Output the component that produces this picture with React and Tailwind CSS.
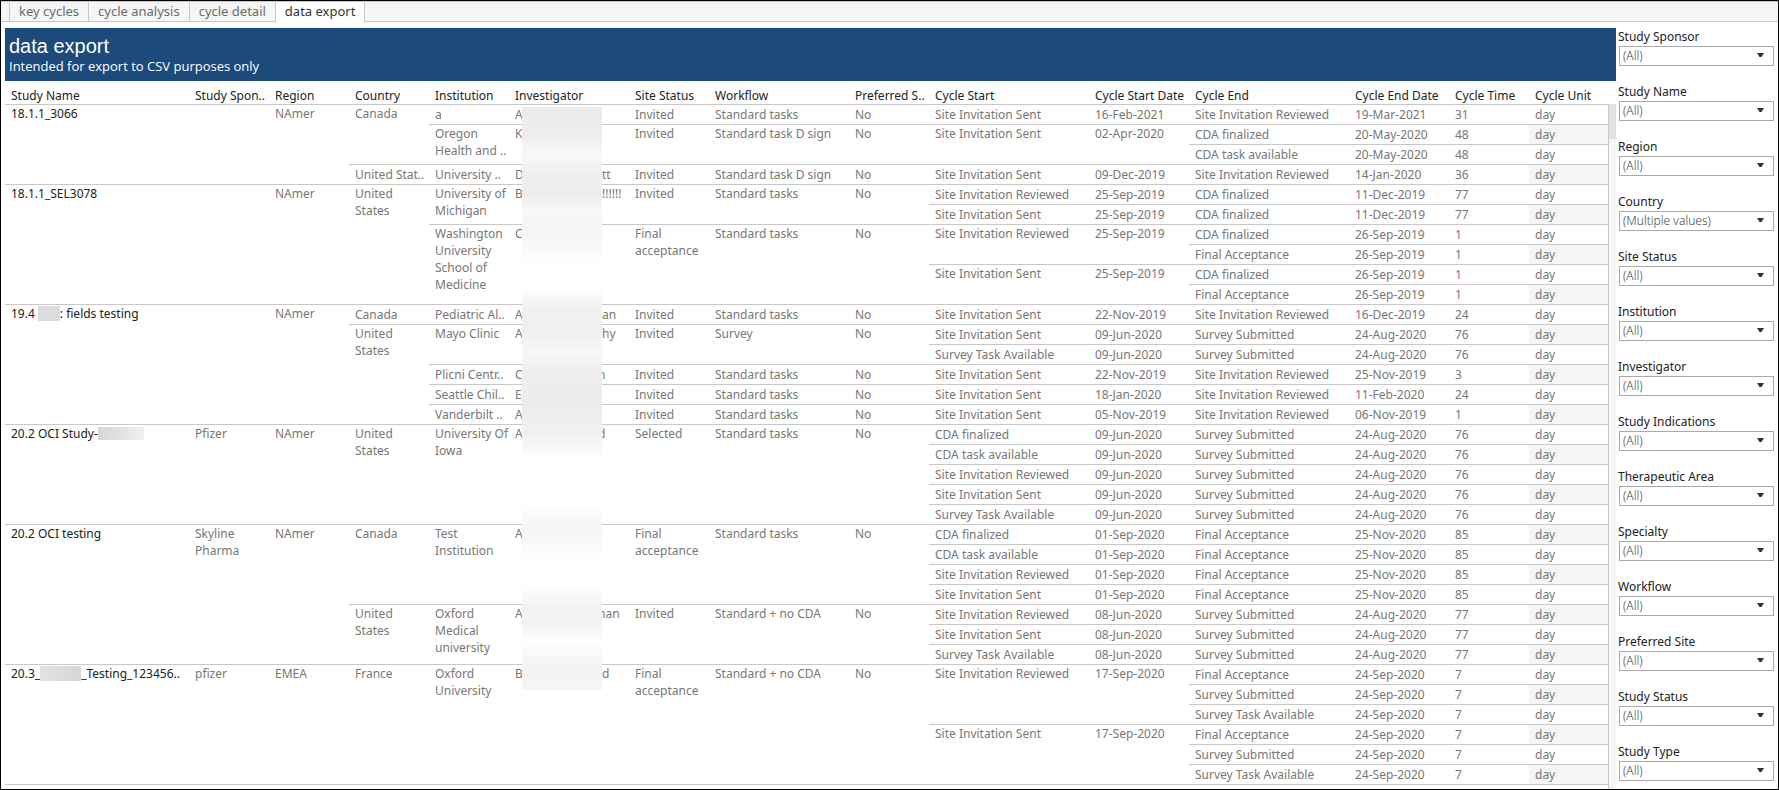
import React from 'react';

const tabs = ['key cycles', 'cycle analysis', 'cycle detail', 'data export'];

const columns = [
  { label: 'Study Name', width: 'w-[184px]' },
  { label: 'Study Spon..', width: 'w-[80px]' },
  { label: 'Region', width: 'w-[80px]' },
  { label: 'Country', width: 'w-[80px]' },
  { label: 'Institution', width: 'w-[80px]' },
  { label: 'Investigator', width: 'w-[120px]' },
  { label: 'Site Status', width: 'w-[80px]' },
  { label: 'Workflow', width: 'w-[140px]' },
  { label: 'Preferred S..', width: 'w-[80px]' },
  { label: 'Cycle Start', width: 'w-[160px]' },
  { label: 'Cycle Start Date', width: 'w-[100px]' },
  { label: 'Cycle End', width: 'w-[160px]' },
  { label: 'Cycle End Date', width: 'w-[100px]' },
  { label: 'Cycle Time', width: 'w-[80px]' },
  { label: 'Cycle Unit', width: 'w-[79px]' },
];

const filters = [
  ['Study Sponsor', '(All)'],
  ['Study Name', '(All)'],
  ['Region', '(All)'],
  ['Country', '(Multiple values)'],
  ['Site Status', '(All)'],
  ['Institution', '(All)'],
  ['Investigator', '(All)'],
  ['Study Indications', '(All)'],
  ['Therapeutic Area', '(All)'],
  ['Specialty', '(All)'],
  ['Workflow', '(All)'],
  ['Preferred Site', '(All)'],
  ['Study Status', '(All)'],
  ['Study Type', '(All)'],
];

const node = (cells, children = []) => ({ cells, children });

const Masked = ({ first, last, clipped }) => (
  <span className="flex">
    <span className="w-[7px] shrink-0">{first}</span>
    <span className={clipped ? 'w-[76px] shrink-0' : 'w-[80px] shrink-0'} />
    <span>{last}</span>
  </span>
);

const NameMask = ({ before, mask, after }) => (
  <span className="flex items-center">
    {before}
    <span className={`${mask} shrink-0`} />
    {after}
  </span>
);

const end = (name, date, time) => node([name, date, time, 'day']);

// study > country > institution > cycle start > cycle end
const studies = [
  node(['18.1.1_3066', '', 'NAmer'], [
    node(['Canada'], [
      node(['a', <Masked first="A" />, 'Invited', 'Standard tasks', 'No'], [
        node(['Site Invitation Sent', '16-Feb-2021'], [end('Site Invitation Reviewed', '19-Mar-2021', '31')]),
      ]),
      node(['Oregon\nHealth and ..', <Masked first="K" />, 'Invited', 'Standard task D sign', 'No'], [
        node(['Site Invitation Sent', '02-Apr-2020'], [
          end('CDA finalized', '20-May-2020', '48'),
          end('CDA task available', '20-May-2020', '48'),
        ]),
      ]),
    ]),
    node(['United Stat..'], [
      node(['University ..', <Masked first="D" last="tt" />, 'Invited', 'Standard task D sign', 'No'], [
        node(['Site Invitation Sent', '09-Dec-2019'], [end('Site Invitation Reviewed', '14-Jan-2020', '36')]),
      ]),
    ]),
  ]),
  node(['18.1.1_SEL3078', '', 'NAmer'], [
    node(['United\nStates'], [
      node(['University of\nMichigan', <Masked first="B" last="!!!!!!" />, 'Invited', 'Standard tasks', 'No'], [
        node(['Site Invitation Reviewed', '25-Sep-2019'], [end('CDA finalized', '11-Dec-2019', '77')]),
        node(['Site Invitation Sent', '25-Sep-2019'], [end('CDA finalized', '11-Dec-2019', '77')]),
      ]),
      node(['Washington\nUniversity\nSchool of\nMedicine', <Masked first="C" />, 'Final\nacceptance', 'Standard tasks', 'No'], [
        node(['Site Invitation Reviewed', '25-Sep-2019'], [
          end('CDA finalized', '26-Sep-2019', '1'),
          end('Final Acceptance', '26-Sep-2019', '1'),
        ]),
        node(['Site Invitation Sent', '25-Sep-2019'], [
          end('CDA finalized', '26-Sep-2019', '1'),
          end('Final Acceptance', '26-Sep-2019', '1'),
        ]),
      ]),
    ]),
  ]),
  node([
    <NameMask before="19.4" mask="ml-[3px] h-[15px] w-[22px] bg-[#dcdcdc]" after=": fields testing" />,
    '',
    'NAmer',
  ], [
    node(['Canada'], [
      node(['Pediatric Al..', <Masked first="A" last="an" />, 'Invited', 'Standard tasks', 'No'], [
        node(['Site Invitation Sent', '22-Nov-2019'], [end('Site Invitation Reviewed', '16-Dec-2019', '24')]),
      ]),
    ]),
    node(['United\nStates'], [
      node(['Mayo Clinic', <Masked first="A" last="hy" />, 'Invited', 'Survey', 'No'], [
        node(['Site Invitation Sent', '09-Jun-2020'], [end('Survey Submitted', '24-Aug-2020', '76')]),
        node(['Survey Task Available', '09-Jun-2020'], [end('Survey Submitted', '24-Aug-2020', '76')]),
      ]),
      node(['Plicni Centr..', <Masked first="C" last="n" clipped />, 'Invited', 'Standard tasks', 'No'], [
        node(['Site Invitation Sent', '22-Nov-2019'], [end('Site Invitation Reviewed', '25-Nov-2019', '3')]),
      ]),
      node(['Seattle Chil..', <Masked first="E" />, 'Invited', 'Standard tasks', 'No'], [
        node(['Site Invitation Sent', '18-Jan-2020'], [end('Site Invitation Reviewed', '11-Feb-2020', '24')]),
      ]),
      node(['Vanderbilt ..', <Masked first="A" />, 'Invited', 'Standard tasks', 'No'], [
        node(['Site Invitation Sent', '05-Nov-2019'], [end('Site Invitation Reviewed', '06-Nov-2019', '1')]),
      ]),
    ]),
  ]),
  node([
    <NameMask before="20.2 OCI Study-" mask="h-[13px] w-[46px] bg-linear-to-r from-[#d6d6d6] to-[#f0f0f0]" />,
    'Pfizer',
    'NAmer',
  ], [
    node(['United\nStates'], [
      node(['University Of\nIowa', <Masked first="A" last="d" clipped />, 'Selected', 'Standard tasks', 'No'], [
        node(['CDA finalized', '09-Jun-2020'], [end('Survey Submitted', '24-Aug-2020', '76')]),
        node(['CDA task available', '09-Jun-2020'], [end('Survey Submitted', '24-Aug-2020', '76')]),
        node(['Site Invitation Reviewed', '09-Jun-2020'], [end('Survey Submitted', '24-Aug-2020', '76')]),
        node(['Site Invitation Sent', '09-Jun-2020'], [end('Survey Submitted', '24-Aug-2020', '76')]),
        node(['Survey Task Available', '09-Jun-2020'], [end('Survey Submitted', '24-Aug-2020', '76')]),
      ]),
    ]),
  ]),
  node(['20.2 OCI testing', 'Skyline\nPharma', 'NAmer'], [
    node(['Canada'], [
      node(['Test\nInstitution', <Masked first="A" />, 'Final\nacceptance', 'Standard tasks', 'No'], [
        node(['CDA finalized', '01-Sep-2020'], [end('Final Acceptance', '25-Nov-2020', '85')]),
        node(['CDA task available', '01-Sep-2020'], [end('Final Acceptance', '25-Nov-2020', '85')]),
        node(['Site Invitation Reviewed', '01-Sep-2020'], [end('Final Acceptance', '25-Nov-2020', '85')]),
        node(['Site Invitation Sent', '01-Sep-2020'], [end('Final Acceptance', '25-Nov-2020', '85')]),
      ]),
    ]),
    node(['United\nStates'], [
      node(['Oxford\nMedical\nuniversity', <Masked first="A" last="nan" clipped />, 'Invited', 'Standard + no CDA', 'No'], [
        node(['Site Invitation Reviewed', '08-Jun-2020'], [end('Survey Submitted', '24-Aug-2020', '77')]),
        node(['Site Invitation Sent', '08-Jun-2020'], [end('Survey Submitted', '24-Aug-2020', '77')]),
        node(['Survey Task Available', '08-Jun-2020'], [end('Survey Submitted', '24-Aug-2020', '77')]),
      ]),
    ]),
  ]),
  node([
    <NameMask before="20.3_" mask="h-[15px] w-[41px] bg-linear-to-r from-[#e2e2e2] to-[#d6d6d6]" after="_Testing_123456.." />,
    'pfizer',
    'EMEA',
  ], [
    node(['France'], [
      node(['Oxford\nUniversity', <Masked first="B" last="d" />, 'Final\nacceptance', 'Standard + no CDA', 'No'], [
        node(['Site Invitation Reviewed', '17-Sep-2020'], [
          end('Final Acceptance', '24-Sep-2020', '7'),
          end('Survey Submitted', '24-Sep-2020', '7'),
          end('Survey Task Available', '24-Sep-2020', '7'),
        ]),
        node(['Site Invitation Sent', '17-Sep-2020'], [
          end('Final Acceptance', '24-Sep-2020', '7'),
          end('Survey Submitted', '24-Sep-2020', '7'),
          end('Survey Task Available', '24-Sep-2020', '7'),
        ]),
      ]),
    ]),
  ]),
];

const countLeaves = (n) =>
  n.children.length === 0 ? 1 : n.children.reduce((sum, child) => sum + countLeaves(child), 0);

// Flatten the tree into table rows, each holding only the cells that start on it
const toRows = (nodes) => {
  const rows = [];
  const walk = (n, col, pending) => {
    const span = countLeaves(n);
    const cells = [...pending, ...n.cells.map((content, i) => ({ content, span, col: col + i }))];
    if (n.children.length === 0) {
      rows.push(cells);
      return;
    }
    n.children.forEach((child, i) => walk(child, col + n.cells.length, i === 0 ? cells : []));
  };
  nodes.forEach((n) => walk(n, 0, []));
  return rows;
};

const rows = toRows(studies);

const TabBar = () => (
  <nav className="flex h-[21px] border-t border-[#c8c8c8] bg-[#f5f5f5] text-[13px] leading-[19px] text-[#6b6b6b]">
    <span className="w-2 border-b border-[#c8c8c8]" />
    {tabs.map((tab, i) => (
      <button
        key={tab}
        type="button"
        className={
          i === tabs.length - 1
            ? 'border-r border-l border-[#c8c8c8] bg-white px-[9px] pb-px text-[#333333]'
            : 'border-b border-l border-[#c8c8c8] px-[9px]'
        }
      >
        {tab}
      </button>
    ))}
    <span className="flex-1 border-b border-[#c8c8c8]" />
  </nav>
);

// Blurred strip that hides the investigator names
const NameStrip = () => (
  <span className="absolute top-[2px] left-[13px] z-10 h-[583px] w-[80px] bg-[linear-gradient(to_bottom,#ebebeb_0px,#ededed_28px,#f8f8f8_48px,#eeeeee_68px,#ededed_88px,#f8f8f8_104px,#f4f4f4_128px,#fefefe_152px,#ffffff_180px,#f0f0f0_203px,#efefef_224px,#f8f8f8_244px,#ededed_266px,#ececec_300px,#f0f0f0_326px,#ffffff_352px,#ffffff_396px,#f3f4f4_423px,#ffffff_453px,#ffffff_476px,#f2f2f2_502px,#f3f3f3_518px,#fefefe_534px,#f8f8f8_548px,#f2f2f2_568px,#f6f6f6_583px)]" />
);

const ExportTable = () => (
  <table className="w-full table-fixed border-separate border-spacing-0 text-xs">
    <colgroup>
      {columns.map((c) => (
        <col key={c.label} className={c.width} />
      ))}
    </colgroup>
    <thead>
      <tr className="h-6">
        {columns.map((c) => (
          <th
            key={c.label}
            scope="col"
            className="border-b border-[#c8c8c8] p-0 pt-[6px] pl-[6px] text-left leading-[17px] font-normal whitespace-nowrap text-[#222222]"
          >
            {c.label}
          </th>
        ))}
      </tr>
    </thead>
    <tbody>
      {rows.map((cells, r) => (
        <tr key={r} className="h-5">
          {cells.map(({ content, span, col }) => (
            <td
              key={col}
              rowSpan={span}
              className={`relative border-b border-[#c8c8c8] p-0 pl-[6px] align-top leading-[17px] whitespace-pre ${
                span > 1 ? 'pt-0' : 'pt-px'
              } ${col === 0 ? 'text-[#222222]' : 'text-[#777777]'} ${
                col === 14 && r % 2 === 1 ? 'bg-[#f5f5f5]' : ''
              }`}
            >
              {content}
              {r === 0 && col === 5 && <NameStrip />}
            </td>
          ))}
        </tr>
      ))}
    </tbody>
  </table>
);

const Filter = ({ label, value }) => {
  const id = label.toLowerCase().replace(/ /g, '-');
  return (
    <div className="text-xs">
      <label htmlFor={id} className="block h-[18px] leading-[18px] text-[#222222]">
        {label}
      </label>
      <div className="relative ml-px">
        <select
          id={id}
          className="block h-5 w-full appearance-none border border-[#a9a9a9] bg-white pl-[3px] leading-[18px] font-light text-[#444444]"
        >
          <option>{value}</option>
        </select>
        <svg className="pointer-events-none absolute top-[7px] right-[10px]" width="7" height="4" viewBox="0 0 7 4">
          <path d="M0 0h7L4.5 4h-2z" fill="#333333" />
        </svg>
      </div>
    </div>
  );
};

const App = () => {
  return (
    <div className="flex min-h-screen flex-col border border-black bg-white font-['Noto_Sans',sans-serif]">
      <TabBar />
      <div className="flex flex-1 pt-[6px]">
        <main className="flex min-w-0 flex-1 flex-col pl-1">
          <header className="h-[53px] bg-[#1c4a7a] pt-[6px] pl-1 text-white">
            <h1 className="font-['Liberation_Sans',sans-serif] text-xl leading-6">data export</h1>
            <p className="font-['Open_Sans',sans-serif] text-[13px] leading-[17px]">
              Intended for export to CSV purposes only
            </p>
          </header>
          <div className="flex flex-1">
            <div className="min-w-0 flex-1">
              <ExportTable />
            </div>
            <div className="mt-[23px] w-2 border-l border-[#c8c8c8] bg-[#f5f5f5]">
              <div className="h-[35px] bg-[#e1e1e1]" />
            </div>
          </div>
        </main>
        <aside className="flex w-[162px] flex-col gap-[17px] pr-1 pl-[2px]">
          {filters.map(([label, value]) => (
            <Filter key={label} label={label} value={value} />
          ))}
        </aside>
      </div>
    </div>
  );
};

export default App;
